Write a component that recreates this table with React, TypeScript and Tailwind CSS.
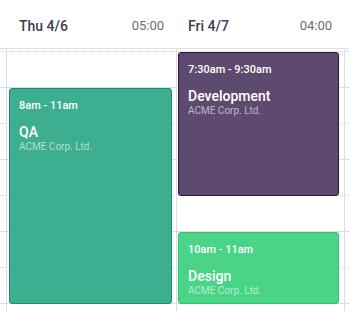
import React from "react";

type Ev = { time: string; title: string; left: number; top: number; width: number; height: number; bg: string; border: string };

const rows = Array.from({ length: 9 });

const medium = { fontFamily: "'Roboto Medium', Roboto, 'Noto Sans', sans-serif" };

function Card({ e }: { e: Ev }) {
  return (
    <div
      className={`absolute rounded-[3px] border pl-[9px] pt-[10px] text-white ${e.bg} ${e.border}`}
      style={{ left: e.left, top: e.top, width: e.width, height: e.height }}
    >
      <div className="text-[11px] leading-[14px] font-normal" style={medium}>{e.time}</div>
      <div className="mt-[10px] text-[14px] leading-[18px] font-normal" style={medium}>{e.title}</div>
      <div className="text-[10px] leading-[12px] text-white/60">ACME Corp. Ltd.</div>
    </div>
  );
}

export default function App() {
  const events: Ev[] = [
    { time: "8am - 11am", title: "QA", left: 9, top: 39, width: 163, height: 216, bg: "bg-[#3dae8f]", border: "border-[#14936c]" },
    { time: "7:30am - 9:30am", title: "Development", left: 178, top: 3, width: 161, height: 144, bg: "bg-[#5e4a6e]", border: "border-[#2b1a3c]" },
    { time: "10am - 11am", title: "Design", left: 178, top: 183, width: 161, height: 72, bg: "bg-[#4ad487]", border: "border-[#2cc76c]" },
  ];
  return (
    <div className="w-[349px] h-[311px] overflow-hidden bg-white" style={{ fontFamily: "Roboto, 'Noto Sans', sans-serif" }}>
      <div className="flex h-[49px] border-b border-[#e0e0e0]">
        <div className="w-[6px] shrink-0" />
        <div className="flex w-[170px] shrink-0 items-center justify-between pl-[13px] pr-[12px] pt-[4px]">
          <span className="text-[14px] font-normal text-[#3d4050]" style={medium}>Thu 4/6</span>
          <span className="text-[13px] text-[#6a6d78]">05:00</span>
        </div>
        <div className="flex w-[168px] shrink-0 items-center justify-between pl-[12px] pr-[12px] pt-[4px]">
          <span className="text-[14px] font-normal text-[#3d4050]" style={medium}>Fri 4/7</span>
          <span className="text-[13px] text-[#6a6d78]">04:00</span>
        </div>
      </div>
      <div className="relative">
        <div className="flex flex-col">
          <div className="h-[3px] border-b border-dotted border-[#d4d4d4]" />
          {rows.map((_, i) => (
            <div
              key={i}
              className={
                i % 2 === 0
                  ? "h-[36px] border-b border-solid border-[#dcdcdc]"
                  : "h-[36px] border-b border-dotted border-[#d4d4d4]"
              }
            />
          ))}
        </div>
        <div className="absolute inset-0 flex">
          <div className="w-[6px] shrink-0" />
          <div className="w-[170px] shrink-0 border-l border-[#dcdcdc]" />
          <div className="w-[168px] shrink-0 border-l border-[#dcdcdc]" />
          <div className="flex-1 border-l border-[#dcdcdc]" />
        </div>
        {events.map((e) => (
          <Card key={e.title} e={e} />
        ))}
      </div>
    </div>
  );
}
